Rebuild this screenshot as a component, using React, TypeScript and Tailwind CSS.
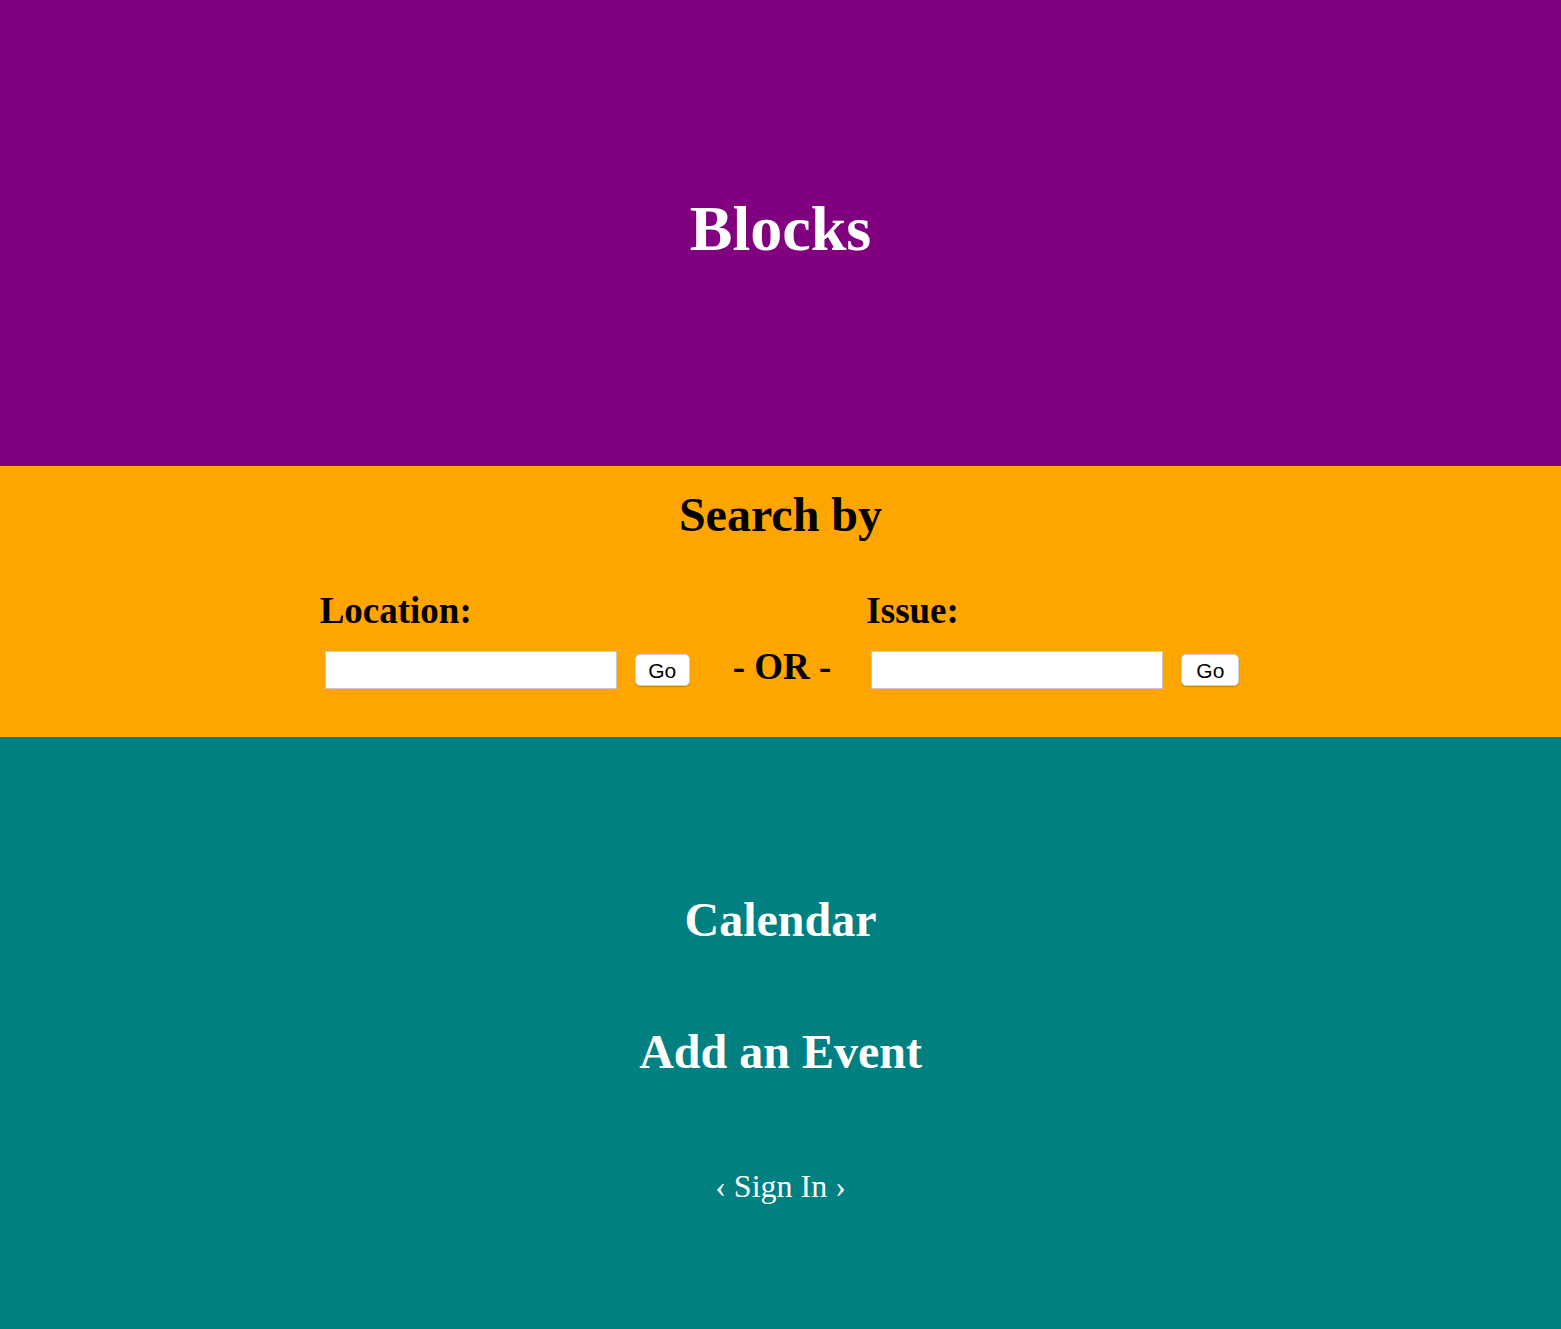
import React from 'react'

const serif = { fontFamily: '"Liberation Serif", "Times New Roman", serif' }

const SearchField = ({ label, goWidth }: { label: string; goWidth: string }) => {
  return (
    <div className="flex flex-col">
      <h2 className="text-[37px] leading-[44px] font-bold text-black">{label}</h2>
      <div className="flex items-center mt-[18px] ml-[5px]">
        <input
          type="text"
          className="w-[292px] h-[38px] bg-white border border-[#c8c8c8] outline-none"
        />
        <button
          className={`ml-[18px] ${goWidth} h-[32px] bg-white rounded-[5px] border border-[#d0d0d0] shadow-[0_1px_1px_rgba(0,0,0,0.2)] text-[21px] leading-none text-black`}
          style={{ fontFamily: '"Liberation Sans", Arial, sans-serif' }}
        >
          Go
        </button>
      </div>
    </div>
  )
}

export default function App() {
  return (
    <div className="w-full" style={serif}>
      {/* header */}
      <div className="h-[466px] bg-[#800080] pt-[197px] text-center">
        <h1 className="text-[64px] leading-[64px] font-bold text-white">Blocks</h1>
      </div>

      {/* search */}
      <div className="h-[271px] bg-[#ffa500] pt-[25px]">
        <h2 className="text-center text-[48px] leading-[48px] font-bold text-black">Search by</h2>
        <div className="flex justify-center items-end mt-[50px] pr-[2px]">
          <SearchField label="Location:" goWidth="w-[55px]" />
          <div className="ml-[43px] mr-[35px] text-[37px] leading-[44px] font-bold text-black">
            - OR -
          </div>
          <SearchField label="Issue:" goWidth="w-[58px]" />
        </div>
      </div>

      {/* links */}
      <div className="h-[592px] bg-[#008080] pt-[159px] text-center text-white">
        <h2 className="text-[48px] leading-[48px] font-bold">Calendar</h2>
        <h2 className="mt-[84px] text-[48px] leading-[48px] font-bold">Add an Event</h2>
        <p className="mt-[94px] text-[32px] leading-[32px]">‹ Sign In ›</p>
      </div>
    </div>
  )
}
